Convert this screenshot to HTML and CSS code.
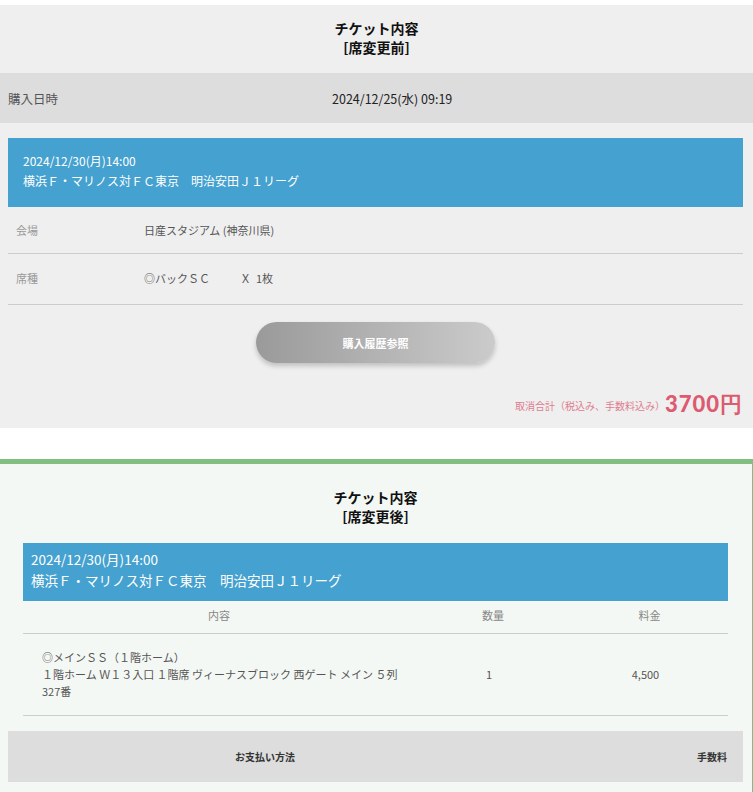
FILE: index.html
```html
<!DOCTYPE html>
<html lang="ja">
<head>
    <meta charset="UTF-8">
    <meta name="viewport" content="width=device-width, initial-scale=1.0">
    <title>チケット内容</title>
    <link rel="stylesheet" href="styles.css">
</head>
<body>

    <!-- 席変更前 -->
    <section class="ticket ticket-before">
        <h2 class="ticket-title">チケット内容<br>[席変更前]</h2>

        <div class="purchase-row">
            <span class="purchase-label">購入日時</span>
            <span class="purchase-date">2024/12/25(水) 09:19</span>
        </div>

        <div class="ticket-body">
            <div class="event-box">
                <p>2024/12/30(月)14:00</p>
                <p>横浜Ｆ・マリノス対ＦＣ東京　明治安田Ｊ１リーグ</p>
            </div>

            <dl class="info-list">
                <div class="info-row">
                    <dt>会場</dt>
                    <dd>日産スタジアム (神奈川県)</dd>
                </div>
                <div class="info-row">
                    <dt>席種</dt>
                    <dd>◎バックＳＣ<span class="qty">Ｘ&nbsp;&nbsp;1枚</span></dd>
                </div>
            </dl>

            <div class="btn-wrap">
                <a class="history-btn" href="#">購入履歴参照</a>
            </div>

            <p class="total">取消合計（税込み、手数料込み）<strong>3700円</strong></p>
        </div>
    </section>

    <!-- 席変更後 -->
    <section class="ticket ticket-after">
        <h2 class="ticket-title">チケット内容<br>[席変更後]</h2>

        <div class="event-box event-box-lg">
            <p>2024/12/30(月)14:00</p>
            <p>横浜Ｆ・マリノス対ＦＣ東京　明治安田Ｊ１リーグ</p>
        </div>

        <table class="seat-table">
            <colgroup>
                <col class="w-detail">
                <col class="w-qty">
                <col class="w-price">
            </colgroup>
            <thead>
                <tr>
                    <th>内容</th>
                    <th>数量</th>
                    <th>料金</th>
                </tr>
            </thead>
            <tbody>
                <tr>
                    <td class="col-detail">
                        ◎メインＳＳ（１階ホーム）<br>
                        １階ホーム Ｗ１３入口 １階席 ヴィーナスブロック 西ゲート メイン ５列<br>
                        327番
                    </td>
                    <td>1</td>
                    <td>4,500</td>
                </tr>
            </tbody>
        </table>

        <div class="pay-head">
            <span class="pay-method">お支払い方法</span>
            <span class="pay-fee">手数料</span>
        </div>
    </section>

</body>
</html>
```

FILE: styles.css
```css
body {
    margin: 0;
    width: 753px;
    font-family: "Noto Sans CJK JP", "Noto Sans", sans-serif;
    color: #333;
    background-color: #fff;
}
p {
    margin: 0;
}

.ticket-title {
    margin: 0;
    text-align: center;
    font-size: 14px;
    line-height: 19px;
    font-weight: bold;
    color: #111;
}

/* before */
.ticket-before {
    margin-top: 5px;
    background-color: #efefef;
    padding-bottom: 9px;
}
.ticket-before .ticket-title {
    padding: 14px 0 16px;
}
.purchase-row {
    display: grid;
    grid-template-columns: 324px 1fr;
    align-items: center;
    height: 50px;
    padding-left: 8px;
    background-color: #dddddd;
    font-size: 12.5px;
}
.purchase-label {
    color: #555;
}
.purchase-date {
    color: #222;
}
.ticket-body {
    padding: 15px 10px 0 8px;
}

.event-box {
    background-color: #45a1cf;
    color: #fff;
    padding: 13px 15px 16px;
    font-size: 12px;
    line-height: 20px;
}
.event-box-lg {
    padding: 6px 8px 10px;
    font-size: 13.5px;
    line-height: 21px;
}

.info-list {
    margin: 0;
}
.info-row {
    display: grid;
    grid-template-columns: 128px 1fr;
    padding: 15px 0 14px 8px;
    border-bottom: 1px solid #cccccc;
    font-size: 11px;
    line-height: 17px;
}
.info-row + .info-row {
    padding: 16px 0 17px 8px;
}
.info-row dt {
    color: #999;
}
.info-row dd {
    margin: 0;
    color: #555;
}
.qty {
    margin-left: 30px;
}

.btn-wrap {
    display: flex;
    justify-content: center;
    margin-top: 17px;
}
.history-btn {
    display: flex;
    align-items: center;
    justify-content: center;
    width: 239px;
    height: 41px;
    border-radius: 21px;
    background: linear-gradient(to right, #9a9a9a, #cbcbcb);
    box-shadow: 0 3px 5px rgba(0, 0, 0, 0.2);
    color: #fff;
    font-size: 11px;
    font-weight: bold;
    text-decoration: none;
}

.total {
    margin-top: 28px;
    text-align: right;
    font-size: 10px;
    color: #e07d90;
    line-height: 26px;
}
.total strong {
    font-family: "Lato", sans-serif;
    font-size: 22px;
    font-weight: 900;
    color: #dd5a70;
    letter-spacing: 1px;
    vertical-align: -2px;
}

/* after */
.ticket-after {
    margin-top: 31px;
    background-color: #f4f8f4;
    border-top: 5px solid #80bf80;
    border-right: 1px solid #80bf80;
    padding: 24px 9px 10px 8px;
}
.ticket-after .ticket-title {
    margin-bottom: 17px;
}
.ticket-after .event-box {
    margin: 0 15px;
}

.seat-table {
    width: 705px;
    margin: 0 15px;
    table-layout: fixed;
    border-collapse: collapse;
    font-size: 11px;
    color: #555;
}
.w-detail {
    width: 392px;
}
.w-qty {
    width: 156px;
}
.seat-table th {
    height: 28px;
    padding: 0 0 4px;
    font-weight: normal;
    color: #888;
    border-bottom: 1px solid #cccccc;
}
.seat-table td {
    padding: 15px 8px 15px 0;
    text-align: center;
    line-height: 17px;
    border-bottom: 1px solid #cccccc;
}
.seat-table td.col-detail {
    text-align: left;
    padding: 15px 0 15px 19px;
}

.pay-head {
    display: grid;
    grid-template-columns: 514px 1fr;
    align-items: center;
    height: 51px;
    margin-top: 15px;
    background-color: #dddddd;
    font-size: 10px;
    font-weight: bold;
    color: #333;
}
.pay-method {
    text-align: center;
}
.pay-fee {
    text-align: right;
    padding-right: 16px;
}
```
